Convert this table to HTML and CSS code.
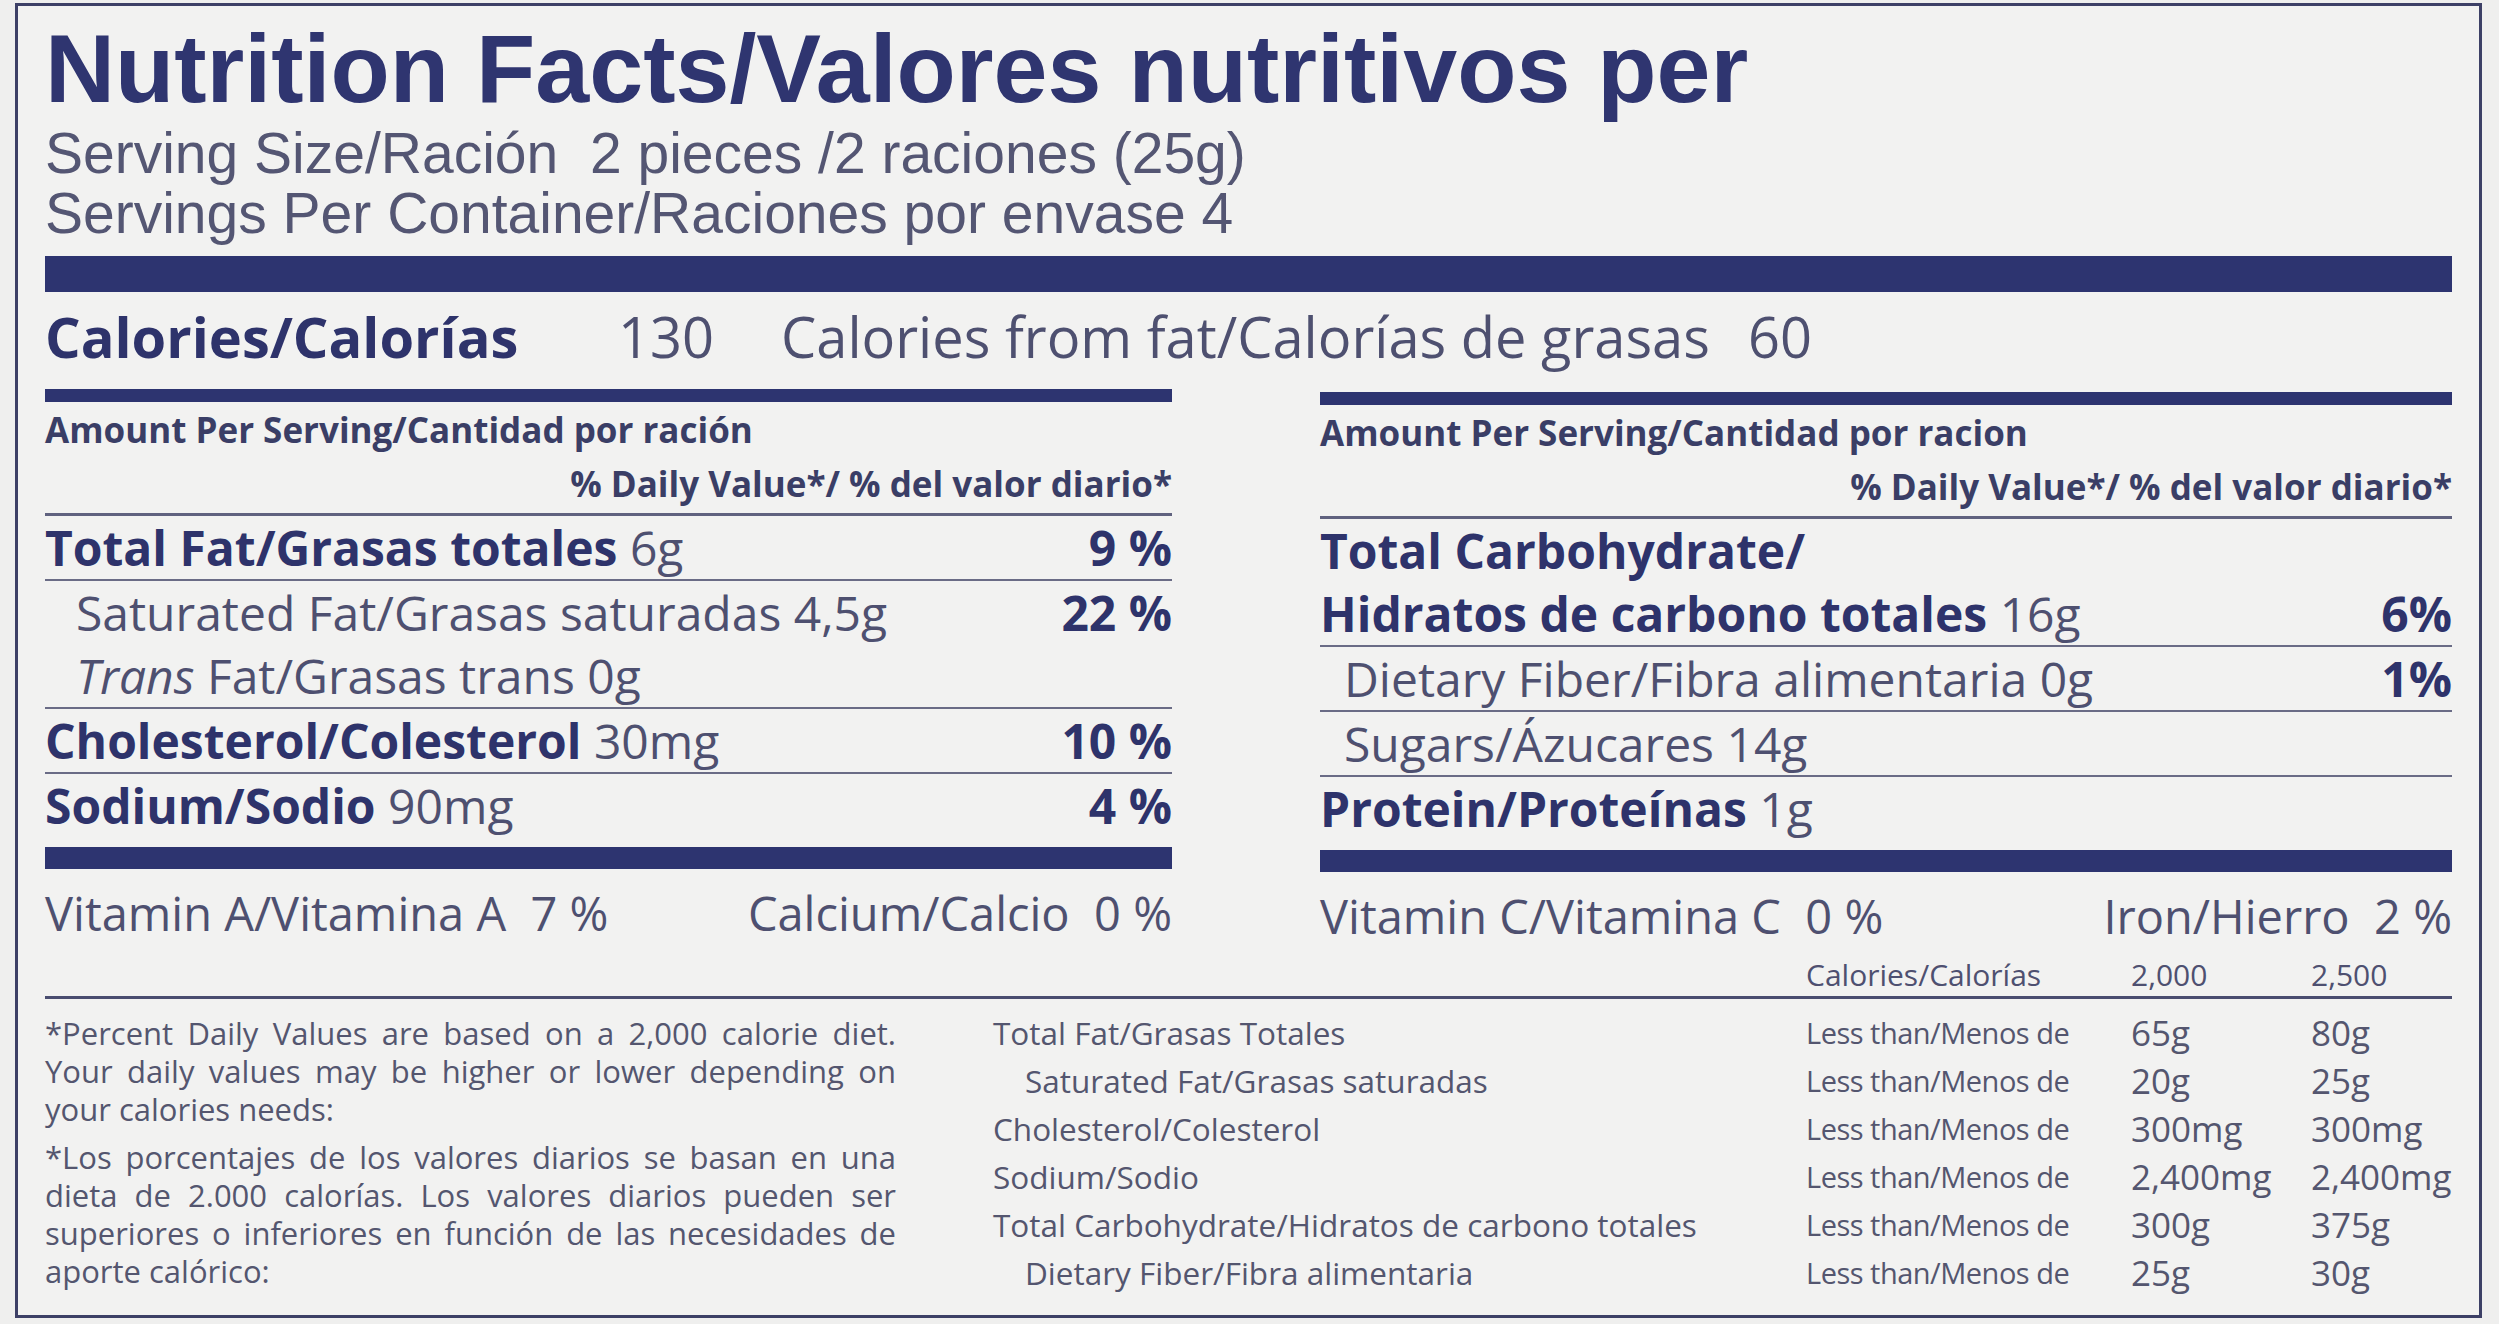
FILE: index.html
```html
<!DOCTYPE html>
<html lang="en">
<head>
<meta charset="utf-8">
<title>Nutrition Facts</title>
<link rel="stylesheet" href="styles.css">
</head>
<body>
<div class="label">
  <div class="title">Nutrition Facts/Valores nutritivos per</div>
  <div class="serving">
    <div class="pre">Serving Size/Ración  2 pieces /2 raciones (25g)</div>
    <div>Servings Per Container/Raciones por envase 4</div>
  </div>
  <div class="bar-thick"></div>
  <div class="calories">
    <span class="cal-label">Calories/Calorías</span>
    <span class="cal-num">130</span>
    <span class="cal-fat">Calories from fat/Calorías de grasas</span>
    <span class="cal-fatnum">60</span>
  </div>

  <div class="columns">
    <div class="col">
      <div class="bar-mid"></div>
      <div class="amount">Amount Per Serving/Cantidad por ración</div>
      <div class="dv">% Daily Value*/ % del valor diario*</div>
      <div class="row"><span><b>Total Fat/Grasas totales</b> 6g</span><b class="pct">9 %</b></div>
      <div class="row line sub-l"><span>Saturated Fat/Grasas saturadas 4,5g</span><b class="pct">22 %</b></div>
      <div class="row sub-l"><span><i>Trans</i> Fat/Grasas trans 0g</span></div>
      <div class="row line"><span><b>Cholesterol/Colesterol</b> 30mg</span><b class="pct">10 %</b></div>
      <div class="row line"><span><b>Sodium/Sodio</b> 90mg</span><b class="pct">4 %</b></div>
      <div class="bar-low"></div>
      <div class="vitamins pre"><span>Vitamin A/Vitamina A  7 %</span><span>Calcium/Calcio  0 %</span></div>
    </div>
    <div class="col col-right">
      <div class="bar-mid"></div>
      <div class="amount">Amount Per Serving/Cantidad por racion</div>
      <div class="dv">% Daily Value*/ % del valor diario*</div>
      <div class="row"><span><b>Total Carbohydrate/</b></span></div>
      <div class="row"><span><b>Hidratos de carbono totales</b> 16g</span><b class="pct">6%</b></div>
      <div class="row line sub-r"><span>Dietary Fiber/Fibra alimentaria 0g</span><b class="pct">1%</b></div>
      <div class="row line sub-r"><span>Sugars/Ázucares 14g</span></div>
      <div class="row line"><span><b>Protein/Proteínas</b> 1g</span></div>
      <div class="bar-low"></div>
      <div class="vitamins pre"><span>Vitamin C/Vitamina C  0 %</span><span>Iron/Hierro  2 %</span></div>
    </div>
  </div>

  <div class="foot-head">
    <span></span>
    <span>Calories/Calorías</span>
    <span>2,000</span>
    <span>2,500</span>
  </div>

  <div class="foot">
    <div class="note">
      <div class="para">
        <div class="jl">*Percent Daily Values are based on a 2,000 calorie diet.</div>
        <div class="jl">Your daily values may be higher or lower depending on</div>
        <div>your calories needs:</div>
      </div>
      <div class="para">
        <div class="jl">*Los porcentajes de los valores diarios se basan en una</div>
        <div class="jl">dieta de 2.000 calorías. Los valores diarios pueden ser</div>
        <div class="jl">superiores o inferiores en función de las necesidades de</div>
        <div>aporte calórico:</div>
      </div>
    </div>
    <div class="dv-table">
      <span class="lbl">Total Fat/Grasas Totales</span><span class="lt">Less than/Menos de</span><span class="val">65g</span><span class="val">80g</span>
      <span class="lbl ind">Saturated Fat/Grasas saturadas</span><span class="lt">Less than/Menos de</span><span class="val">20g</span><span class="val">25g</span>
      <span class="lbl">Cholesterol/Colesterol</span><span class="lt">Less than/Menos de</span><span class="val">300mg</span><span class="val">300mg</span>
      <span class="lbl">Sodium/Sodio</span><span class="lt">Less than/Menos de</span><span class="val">2,400mg</span><span class="val">2,400mg</span>
      <span class="lbl">Total Carbohydrate/Hidratos de carbono totales</span><span class="lt">Less than/Menos de</span><span class="val">300g</span><span class="val">375g</span>
      <span class="lbl ind">Dietary Fiber/Fibra alimentaria</span><span class="lt">Less than/Menos de</span><span class="val">25g</span><span class="val">30g</span>
    </div>
  </div>
</div>
</body>
</html>
```

FILE: styles.css
```css
html, body {
  margin: 0;
  padding: 0;
  background: #efefee;
}

body {
  width: 2499px;
  height: 1324px;
  overflow: hidden;
  font-family: "Open Sans", "Noto Sans", sans-serif;
  color: #4e5070;
}

.label {
  margin: 3px 0 0 15px;
  width: 2467px;
  box-sizing: border-box;
  border: 3px solid #3d4066;
  padding: 10px 27px 18px 27px;
  background: #f2f2f1;
}

.pre {
  white-space: pre;
}

b {
  font-weight: 700;
  color: #2e336b;
}

.title {
  font-family: "Liberation Sans", Arial, sans-serif;
  font-size: 97px;
  line-height: 105px;
  font-weight: 700;
  color: #2f3570;
  white-space: nowrap;
}

.serving {
  margin-top: 2px;
  font-family: "Liberation Sans", Arial, sans-serif;
  font-size: 57px;
  line-height: 60px;
  color: #545673;
  white-space: nowrap;
}

.bar-thick {
  margin-top: 13px;
  height: 36px;
  background: #2d3470;
}

.calories {
  margin-top: 14px;
  display: flex;
  font-size: 56px;
  line-height: 60px;
  white-space: nowrap;
}

.cal-label {
  width: 573px;
  font-weight: 700;
  font-size: 56px;
  color: #2e336b;
}

.cal-num {
  width: 163px;
}

.cal-fat {
  width: 967px;
}

.columns {
  margin-top: 23px;
  display: grid;
  grid-template-columns: 1127px 1fr;
  column-gap: 148px;
  align-items: start;
}

.col-right {
  padding-top: 3px;
}

.bar-mid {
  height: 13px;
  background: #2d3470;
}

.amount {
  margin-top: 8px;
  font-size: 35px;
  line-height: 40px;
  font-weight: 700;
  color: #3a3e66;
  white-space: nowrap;
}

.dv {
  margin-top: 10px;
  padding-bottom: 5px;
  border-bottom: 3px solid #60627f;
  font-size: 35px;
  line-height: 48px;
  font-weight: 700;
  color: #3a3e66;
  text-align: right;
  white-space: nowrap;
}

.row {
  display: flex;
  justify-content: space-between;
  height: 63px;
  font-size: 48px;
  line-height: 63px;
  white-space: nowrap;
}

.row.line {
  border-top: 2px solid #6a6c86;
}

.sub-l > span:first-child {
  padding-left: 31px;
}

.sub-r > span:first-child {
  padding-left: 24px;
}

.pct {
  font-weight: 700;
}

.bar-low {
  margin-top: 10px;
  height: 22px;
  background: #2d3470;
}

.vitamins {
  margin-top: 14px;
  display: flex;
  justify-content: space-between;
  font-size: 47px;
  line-height: 60px;
}

.foot-head {
  margin-top: 12px;
  padding-bottom: 4px;
  display: grid;
  grid-template-columns: 1761px 325px 180px 1fr;
  font-size: 30px;
  line-height: 34px;
  border-bottom: 3px solid #4a4d70;
  white-space: nowrap;
}

.foot {
  display: grid;
  grid-template-columns: 851px 1fr;
  column-gap: 97px;
  align-items: start;
}

.note {
  padding-top: 15px;
  font-size: 31px;
  line-height: 38px;
  color: #54566f;
}

.para + .para {
  margin-top: 10px;
}

.jl {
  text-align: justify;
  text-align-last: justify;
}

.dv-table {
  padding-top: 10px;
  display: grid;
  grid-template-columns: 813px 325px 180px 1fr;
  font-size: 31.5px;
  line-height: 48px;
  color: #54566f;
  white-space: nowrap;
}

.lbl.ind {
  padding-left: 32px;
}

.lt {
  font-size: 29px;
  letter-spacing: -0.5px;
}

.val {
  font-size: 35px;
}
```
